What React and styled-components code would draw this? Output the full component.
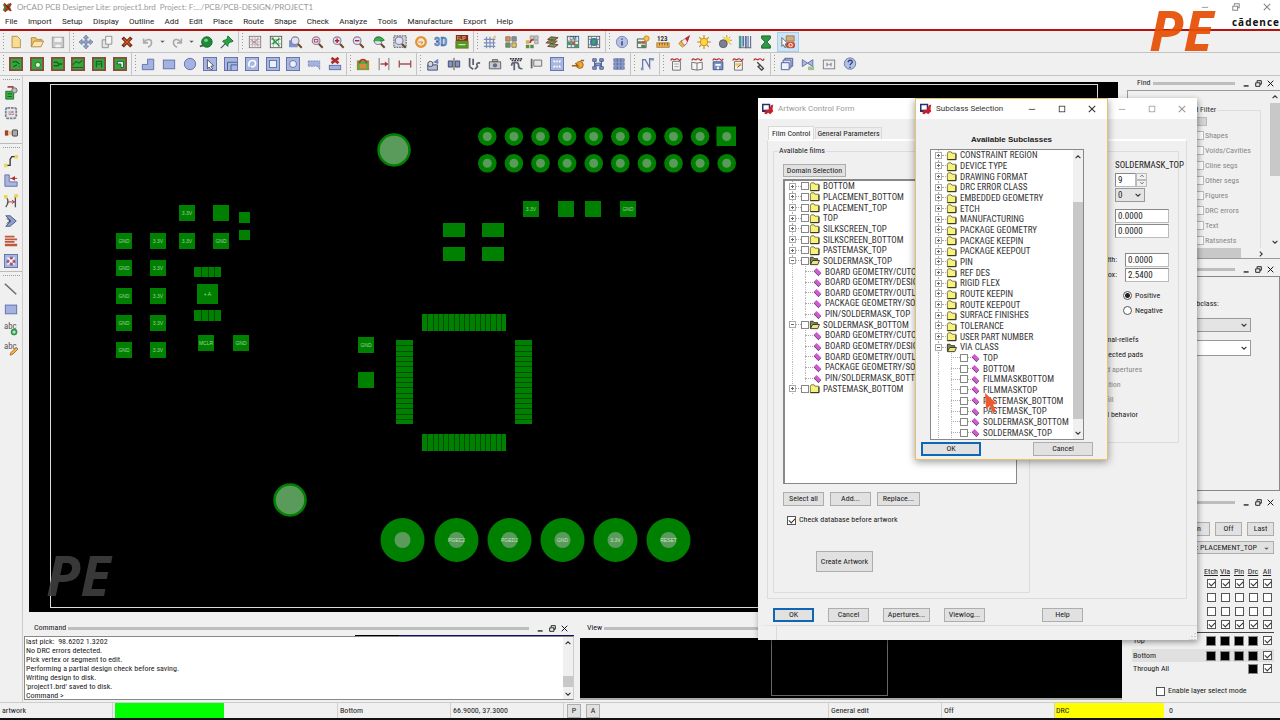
import React from "react";
import styled, { createGlobalStyle, css } from "styled-components";

const GlobalStyle = createGlobalStyle`
  * {
    box-sizing: border-box;
  }

  body {
    margin: 0;
    background: #f0f0f0;
    font-family: "Roboto Condensed", Roboto, sans-serif;
    font-size: 8px;
    line-height: 10px;
    color: #222;
    overflow: hidden;
  }

  button,
  input,
  select,
  textarea {
    font: inherit;
    color: inherit;
    margin: 0;
  }
`;

const Page = styled.div`
  position: relative;
  display: flex;
  flex-direction: column;
  height: 100vh;
  overflow: hidden;
`;

/* ---------- icons ---------- */

const glass = (
  <>
    <path d="M10 10l4.5 4.5" stroke="#6b4a2a" strokeWidth="2.4" />
    <circle cx="7" cy="6.5" r="4.4" fill="#dfe3f2" stroke="#8c7f9c" strokeWidth="1.3" />
  </>
);

const board = (
  <>
    <rect width="16" height="16" fill="#8a4a3c" />
    <rect x="2" y="2" width="12" height="12" fill="#35a83a" />
  </>
);

const tile = <rect x=".5" y=".5" width="15" height="15" fill="#a9b6e0" stroke="#5a6ba8" />;
const wave = <path d="M2 4c2-4 3 0 5-1s2-2 4 0 2 0 3-1" fill="none" stroke="#b3262c" strokeWidth="1.3" />;
const sheet = <path d="M4 5h9v10H4z" fill="#f4f4f4" stroke="#666" />;

const glyphs = {
  app: (
    <>
      <path d="M1 3l5 2 3-3 5 1-2 5 2 5-5-1-4 2-4-2 2-4z" fill="#3d8a35" />
      <path d="M3 2l10 11M13 2L4 14" stroke="#c4221c" strokeWidth="2.6" />
      <path d="M6 5l5 5" stroke="#222" strokeWidth="1.4" />
    </>
  ),
  form: (
    <>
      <rect x="0" y="1" width="11" height="11" fill="#2b2f6b" />
      <path d="M2 3h7v6H2z" fill="#fff" />
      <path d="M3 14l2-5 4 0 3-6 3-1-1 6 1 3-4 4-3-2-2 2z" fill="#c6202c" />
    </>
  ),
  fresh: <path d="M3.5 1.5h6l3.5 3.5v9.500H3.5z" fill="#f7dc96" stroke="#b48a3c" />,
  open: (
    <>
      <path d="M1.500 13V3h5l1 2h6v3" fill="#f1c66a" stroke="#b4803a" />
      <path d="M1.500 13.500L4.500 7h11l-3 6.500z" fill="#fbe6ae" stroke="#b4803a" />
    </>
  ),
  save: (
    <>
      <rect x="1.500" y="2.500" width="13" height="12" fill="#c9c9c9" stroke="#999" />
      <path d="M4 3h8v5H4zM5 11h6v3H5z" fill="#f3f3f3" />
    </>
  ),
  move: (
    <path
      d="M8 0l3 3.500H9v3.500h3.500V5L16 8l-3.500 3V9H9v3.500h2L8 16l-3-3.500h2V9H3.500v2L0 8l3.500-3v2H7V3.500H5z"
      fill="#93a6c8"
      stroke="#56698f"
      strokeWidth=".7"
    />
  ),
  copy: (
    <>
      <path d="M2.500 5.500h7v9h-7z" fill="#e4e4e4" stroke="#888" />
      <path d="M6.500 1.500h7v9h-7z" fill="#f6f6f6" stroke="#888" />
    </>
  ),
  cut: (
    <>
      <path d="M3 3l10 10M13 3L3 13" stroke="#6e2410" strokeWidth="4" />
      <path d="M4 4l8 8M12 4l-8 8" stroke="#d4582a" strokeWidth="1.500" />
    </>
  ),
  undo: <path d="M3 4v5h5M3.500 8.500C7 3 12.500 5 12 9c0 2-2 4-4 5" fill="none" stroke="#aaa" strokeWidth="1.800" />,
  redo: <path d="M13 4v5H8M12.500 8.500C9 3 3.500 5 4 9c0 2 2 4 4 5" fill="none" stroke="#aaa" strokeWidth="1.800" />,
  caret: <path d="M3 6h10l-5 5z" fill="#555" />,
  dot: (
    <>
      <path d="M1 13l7-2" stroke="#555" strokeWidth="2" />
      <circle cx="9" cy="8" r="6" fill="#1d8a37" stroke="#11602a" />
      <circle cx="8" cy="6" r="2" fill="#7fd28a" />
    </>
  ),
  pin: (
    <>
      <path d="M1 15l6-6" stroke="#555" strokeWidth="1.500" />
      <path d="M9 1l6 6-2 1-2 0-2 3 0 2L3 7l2-1 3-1z" fill="#2aa345" stroke="#14692a" />
    </>
  ),
  rats: (
    <>
      <rect x="1.500" y="1.500" width="13" height="13" fill="#f3ecec" stroke="#777" />
      <path d="M2 5h12M2 8h12M2 11h12M5 2v12M8 2v12M11 2v12" stroke="#c0b7bd" />
      <path d="M3 5l9 7M12 4L5 10" stroke="#b07878" />
    </>
  ),
  ratsOn: (
    <>
      <rect x="1.500" y="1.500" width="13" height="13" fill="#f3f8f3" stroke="#555" />
      <path d="M2 5h12M2 10h12M5 2v12M11 2v12" stroke="#8fb597" />
      <path d="M3 3l9 10M12 4L4 10" stroke="#1f8b36" strokeWidth="1.400" />
    </>
  ),
  zoomFit: (
    <>
      <path d="M0 6h10v8H0z" fill="#7c93cf" />
      {glass}
    </>
  ),
  zoomBox: (
    <>
      {glass}
      <rect x="5" y="5" width="4" height="3" fill="none" stroke="#c23a4a" />
    </>
  ),
  zoomIn: (
    <>
      {glass}
      <path d="M7 4v5M4.500 6.500h5" stroke="#b71c2c" strokeWidth="1.600" />
    </>
  ),
  zoomOut: (
    <>
      {glass}
      <path d="M4.500 6.500h5" stroke="#b71c2c" strokeWidth="1.600" />
    </>
  ),
  zoomBack: (
    <>
      {glass}
      <path d="M2 7c2-6 9-6 12-1L9 7" fill="#3fae4e" stroke="#1b7a2c" />
    </>
  ),
  zoomWorld: (
    <>
      <rect x="1" y="1" width="14" height="13" fill="#cfd6e6" stroke="#444" strokeDasharray="2 1" />
      {glass}
    </>
  ),
  refresh: (
    <>
      <circle cx="8" cy="8" r="5.500" fill="#fbe9cf" stroke="#e0943a" strokeWidth="2.600" />
      <path d="M5 8h5l-2 3" fill="none" stroke="#c87020" />
    </>
  ),
  cube: (
    <text x="0" y="13" fontSize="14" fontWeight="bold" fill="#6f9bd6" stroke="#3f669f" strokeWidth=".5">
      3D
    </text>
  ),
  flip: (
    <>
      <rect x="1" y="0" width="14" height="7" fill="#7c2e1e" />
      <rect x="1" y="7" width="14" height="8" fill="#4c9a2e" stroke="#8b6a1e" />
      <text x="2" y="6" fontSize="6" fill="#f4d27a">FLIP</text>
      <path d="M4 11h8" stroke="#c5e88a" strokeWidth="1.500" />
    </>
  ),
  grid: (
    <>
      <path d="M1 5h13M1 9h13M1 13h13M4 2v13M8 2v13M12 4v11" stroke="#7c8fb8" strokeWidth="1.400" />
      <path d="M11 3l4-2M13 1l1 3" stroke="#e5b04a" />
    </>
  ),
  colors: (
    <>
      <path d="M2 2h5v5H2z" fill="#e58e3c" stroke="#777" />
      <path d="M9 2h5v5H9z" fill="#8a8f98" stroke="#777" />
      <path d="M2 9h5v5H2z" fill="#5f9b55" stroke="#777" />
      <path d="M9 9h5v5H9z" fill="#e9c84c" stroke="#777" />
    </>
  ),
  shadow: (
    <>
      <path d="M6 1h4v4H6zM11 1h4v4h-4zM11 6h4v4h-4z" fill="#c4c8cd" stroke="#999" />
      <path d="M1 6h4v4H1z" fill="#d9ad4a" />
      <path d="M1 11h4v4H1zM6 11h4v4H6z" fill="#5c8c4c" />
      <path d="M6 9c0-3 2-4 4-3" fill="none" stroke="#b83322" strokeWidth="2" />
    </>
  ),
  layers: (
    <>
      <path d="M3 5l4-3 8 1-4 3z" fill="#4d9a4b" stroke="#733" />
      <path d="M1 9l4-3 9 1-4 3z" fill="#4d9a4b" stroke="#a33" />
      <path d="M3 13l4-3 8 1-4 3z" fill="#62a860" stroke="#733" />
    </>
  ),
  cm: (
    <>
      <rect x="1.500" y="1.500" width="13" height="13" fill="#e6efe6" stroke="#3b5c7a" />
      <path d="M2 7h12M2 11h12M6 6v8M10 6v8" stroke="#546a80" />
      <path d="M2 8h4v3H2zM10 11h4v3h-4z" fill="#46a04a" />
      <path d="M7 8h3v3H7z" fill="#c44b3e" />
      <text x="4" y="6" fontSize="6" fill="#234">CM</text>
    </>
  ),
  world: (
    <>
      <rect x="1.500" y="1.500" width="13" height="13" fill="#e9eee9" stroke="#555" />
      <path d="M2 5h12M2 11h12M5 2v12M11 2v12" stroke="#777" />
      <circle cx="8" cy="8" r="4.500" fill="#3876a8" />
      <path d="M6 5l4 1-1 4-3 1z" fill="#45a35a" />
    </>
  ),
  info: (
    <>
      <circle cx="8" cy="8" r="6.500" fill="#b6c1e2" stroke="#7785b3" />
      <path d="M8 4v1.500M8 7v5" stroke="#44558f" strokeWidth="2" />
    </>
  ),
  report: (
    <>
      <path d="M1.500 4.500h10v10h-10z" fill="#f2f2f2" stroke="#444" />
      <path d="M2 7h4v3H2zM6 11h5v3H6z" fill="#46894a" />
      <path d="M6 7h5v3H6z" fill="#b6534a" />
      <circle cx="12" cy="4" r="3" fill="#f3c73c" stroke="#b4862a" />
    </>
  ),
  ruler: (
    <>
      <text x="1" y="7" fontSize="8" fontWeight="bold" fill="#333">123</text>
      <rect x="1" y="9" width="14" height="5" fill="#f0b552" stroke="#a8742a" />
      <path d="M4 9v3M7 9v3M10 9v3M13 9v3" stroke="#7a5520" />
    </>
  ),
  dart: (
    <>
      <path d="M2 10l3-4 5 5-4 3z" fill="#e7b83b" stroke="#8c6a30" strokeWidth=".6" />
      <path d="M5 7l9-6-3 9-3 2z" fill="#f6eaea" stroke="#8c2730" strokeWidth=".6" />
      <path d="M9 4l6-4-3 8z" fill="#c32a38" />
    </>
  ),
  sun: (
    <>
      <path d="M8 0v16M0 8h16M2.500 2.500l11 11M13.500 2.500l-11 11" stroke="#c58a1b" strokeWidth="1.300" />
      <circle cx="8" cy="8" r="4.200" fill="#ffd73a" stroke="#c58a1b" />
    </>
  ),
  dim: (
    <>
      <path d="M10 0v12M4 6h12M6 2l9 9M14 2L7 9" stroke="#c58a1b" />
      <circle cx="10" cy="6" r="3.500" fill="#ffd73a" />
      <circle cx="6" cy="10" r="4.500" fill="#7a8090" stroke="#555c6c" />
    </>
  ),
  bars: (
    <>
      <path d="M1 1h3v14H1z" fill="#4b9a8e" />
      <path d="M5 1h2v12H5zM8 1h2v14H8z" fill="#5573a8" />
      <path d="M11 1h1v14h-1zM14 1h1v14h-1z" fill="#334a7a" />
      <path d="M1 14.500h14" stroke="#667" />
    </>
  ),
  hourglass: <path d="M3 1h10v3L9 8l4 4v3H3v-3l4-4-4-4z" fill="#2c9a46" stroke="#135c26" />,
  noPick: (
    <>
      <path d="M6 1h9v6H6z" fill="#d6ab7c" stroke="#9a7348" />
      <rect x="6.500" y="8.500" width="9" height="6" rx="2" fill="#e1583c" stroke="#b5432c" />
      <circle cx="11" cy="11.500" r="2" fill="none" stroke="#fff" />
      <path d="M1 3l7 7H5l1 4-2 0-1-3-2 2z" fill="#fff" stroke="#333" strokeWidth=".8" />
    </>
  ),
  b1: <>{board}<path d="M4 6l4-1 4 3M5 11l4-2M11 11h1" fill="none" stroke="#14642a" strokeWidth="1.500" /></>,
  b2: <>{board}<circle cx="9" cy="9" r="3" fill="#dff0d8" stroke="#14642a" /></>,
  b3: <>{board}<path d="M3 6h4l2 2h4M3 10h5l2-2" fill="none" stroke="#14642a" strokeWidth="1.500" /></>,
  b4: <>{board}<path d="M2 9l4-4 3 2 4-3M2 12h12" fill="none" stroke="#14642a" strokeWidth="1.300" /></>,
  b5: <>{board}<path d="M5 12V5h6v7M5 8h6" fill="none" stroke="#14642a" strokeWidth="1.300" /></>,
  b6: <>{board}<path d="M5 5h7v7H9V8H5z" fill="#dfe6f2" stroke="#14642a" /></>,
  ell: <path d="M1.500 14.500v-6h6v-6h7v12z" fill="#a3b2df" stroke="#5a6ba8" />,
  rect: <rect x="1.500" y="3.500" width="13" height="10" fill="#a3b2df" stroke="#5a6ba8" />,
  circle: <circle cx="8" cy="8" r="6.500" fill="#a3b2df" stroke="#5a6ba8" />,
  select: <>{tile}<path d="M5 3l7 7-3 .5 2 3-2 1-2-3-2 2z" fill="#fff" stroke="#445" /></>,
  island: <>{tile}<path d="M4 15V6h11M8 15V9h7" fill="none" stroke="#445593" /></>,
  arc: <>{tile}<path d="M5 11c-2-5 1-7 4-7s4 4 2 6-3 2-4 0" fill="none" stroke="#fff" strokeWidth="1.800" /></>,
  square: <>{tile}<rect x="4" y="4" width="8" height="8" fill="#eef0f8" stroke="#5a6ba8" /></>,
  ring: <>{tile}<circle cx="8" cy="8" r="4" fill="#eef0f8" stroke="#5a6ba8" /></>,
  wedge: <path d="M1.500 4.500h13v10c-2-6-6-4-7-4h-6z" fill="#a3b2df" stroke="#7484bb" strokeDasharray="2 1" />,
  void: (
    <>
      <rect x="1.500" y="9.500" width="13" height="5" fill="#a3b2df" stroke="#5a6ba8" />
      <path d="M4 1l8 6M12 1L4 7" stroke="#b02a2a" strokeWidth="3" />
    </>
  ),
  lock: (
    <>
      <rect x="1.500" y="4.500" width="13" height="10" fill="#4fae45" stroke="#a8782a" />
      <path d="M4 7a4 4 0 018 0" fill="none" stroke="#b0392a" strokeWidth="2" />
      <path d="M4 8h8v5H4z" fill="#d98b3b" />
    </>
  ),
  dimension: (
    <>
      <path d="M2.500 1v14M13.500 1v14" stroke="#888" strokeWidth="1.300" />
      <path d="M4 8h6" stroke="#b0333a" strokeWidth="1.500" />
      <path d="M9 5l4 3-4 3z" fill="#b0333a" />
    </>
  ),
  span: <path d="M1.500 4v8M14.500 4v8M2 8h12" fill="none" stroke="#a0565c" strokeWidth="1.600" />,
  place: <><path d="M2 9h11v6H2z" fill="#b4bfe0" stroke="#445" /><circle cx="5" cy="8" r="3" fill="#d6d9e2" stroke="#445" /><path d="M8 6l6-4v6z" fill="#7082b8" /></>,
  mirror: <><path d="M1.500 4.500h5v7h-5zM9.500 4.500h5v7h-5z" fill="#7f91c9" stroke="#445" /><path d="M8 1v14" stroke="#333" /></>,
  tool: <path d="M3 1v10M7 2v7M3 11l4 3M9 14l3-3c-2-3 0-5 3-4" fill="none" stroke="#5c6270" strokeWidth="2" />,
  camera: <><path d="M1.500 5.500h13v8h-13zM5 3h6v2H5z" fill="#c7cad2" stroke="#555" /><circle cx="8" cy="9.500" r="2.500" fill="#666f85" /></>,
  binary: <><path d="M1 2h14M3 4h12" stroke="#333" strokeDasharray="2 1" strokeWidth="1.500" /><path d="M3 10c0-5 8-5 8 0s4 2 4 4M6 7v8" fill="none" stroke="#5e6575" strokeWidth="2" /></>,
  flag: <><path d="M3 2v11" stroke="#666" strokeWidth="2" /><path d="M5.500 3.500h9v7h-9z" fill="#e6e6e6" stroke="#666" /></>,
  fan: <>{tile}<path d="M4 4l2 2M12 4l-2 2M4 12l2-2M12 12l-2-2M8 4v2M8 10v2" stroke="#fff" strokeWidth="1.600" /></>,
  spin: <><circle cx="10" cy="9" r="4" fill="#f0a52e" stroke="#96621a" /><path d="M1 10h7l-3-3M11 4h4" fill="none" stroke="#96621a" strokeWidth="1.500" /></>,
  ladder: <><path d="M2 2h4v3H2zM10 2h4v3h-4zM2 11h4v3H2zM10 11h4v3h-4zM5 7h6v3H5z" fill="#8a9ccf" stroke="#44558f" /><path d="M4 5v6M12 5v6" stroke="#44558f" /></>,
  array: <path d="M2 2h4v3H2zM6 2h4v3H6zM10 2h4v3h-4zM2 6.500h4v3H2zM6 6.500h4v3H6zM10 6.500h4v3h-4zM2 11h4v3H2zM6 11h4v3H6zM10 11h4v3h-4z" fill="#8a9ccf" stroke="#5a6aa0" strokeWidth=".8" />,
  signal: <><path d="M3 13V3l3 0 5 9 0-10h3" fill="none" stroke="#6678ad" strokeWidth="1.500" /><path d="M1 12h3v3H1zM12 1h4v3h-4z" fill="#8593bd" /></>,
  s1: <>{sheet}{wave}<path d="M6 8h5M6 11h5" stroke="#999" /></>,
  s2: <><path d="M2 6l6 1 6-1v8l-6 1-6-1z" fill="#f6f6f6" stroke="#666" />{wave}<path d="M8 7v8" stroke="#666" /></>,
  s3: <><path d="M2.500 5.500h11v9h-11z" fill="#7c95c8" stroke="#334a7a" />{wave}<path d="M5 8h6v2H5zM7 11h2v3H7z" fill="#fff" /></>,
  s4: <>{sheet}{wave}<path d="M5 7h7v3H5z" fill="#f0c95a" /><path d="M7 12l4-3" stroke="#845" /></>,
  s5: <>{wave}<path d="M6 6l7 7-2 2-4-4 3-2" fill="none" stroke="#444" strokeWidth="1.600" /></>,
  stack: <><path d="M5.500 1.500h9v9h-9z" fill="#c2cbe8" stroke="#445593" /><path d="M3.500 3.500h9v9h-9z" fill="#d9dff2" stroke="#445593" /><path d="M1.500 6.500h9v8h-9z" fill="#eef0fa" stroke="#445593" /></>,
  bow: <><path d="M1.500 3l6 4 6-4v8l-6-4-6 4z" fill="#a9b8dd" stroke="#5a6ba8" /><path d="M8 11h7v4H8z" fill="#9cc48f" /></>,
  bowBox: <><rect x="1.500" y="3.500" width="13" height="10" fill="#eee" stroke="#777" /><path d="M5 6l3 2.500L11 6v5L8 8.500 5 11z" fill="#8a94a8" /></>,
  help: <><circle cx="8" cy="7.500" r="6.500" fill="#b6c1e2" stroke="#5f70a8" /><path d="M6 6c0-3 5-3 4.500 0-.5 1.500-2.500 1.500-2.500 3.500M8 11v1.500" fill="none" stroke="#334480" strokeWidth="1.600" /></>,
  unplaced: <><path d="M2 6h9v9H2z" fill="#3fae4a" stroke="#1d6f2a" /><path d="M4 1h6v4" fill="none" stroke="#a34a44" strokeWidth="2" /><circle cx="12" cy="5" r="3" fill="#bbb" stroke="#666" /><path d="M4 9h5M4 12h5" stroke="#155c22" /></>,
  chip: <><rect x="2" y="2" width="12" height="12" rx="2" fill="#e4e4e8" stroke="#7a8294" strokeWidth="2" strokeDasharray="3 1" /><text x="5" y="10" fontSize="6" fill="#a04a5a">U5</text></>,
  swap: <><path d="M1 5h4v6H1z" fill="#a34034" /><path d="M5 6h4v4H5z" fill="#e5cf80" /><rect x="9.500" y="4.500" width="6" height="7" rx="1" fill="#aaa" stroke="#333" /></>,
  route: <><path d="M2 13h5V6l2-3h4" fill="none" stroke="#333" strokeWidth="1.500" /><path d="M0 11h4v4H0zM12 1h4v4h-4z" fill="#ead94e" /></>,
  slide: <><path d="M1 1v13h14V9H6V1z" fill="#a9b6e0" stroke="#5a6ba8" /><path d="M7 5h8M9 5l3-2v4z" stroke="#b02a2a" fill="#b02a2a" /></>,
  spacing: <><path d="M2 3c4 4 3 8 0 12M13 2v13" fill="none" stroke="#555" strokeWidth="1.500" /><path d="M0 1h4v4H0zM12 0h4v4h-4z" fill="#ead94e" /><path d="M5 9h7M9 7l3 2-3 2" fill="none" stroke="#b02a2a" /></>,
  chevrons: <><path d="M2 2h5l7 6-7 6H2l6-6z" fill="#8fa0c9" stroke="#44558f" /><path d="M3 5l4 3-4 3" fill="none" stroke="#333" /></>,
  comb: <path d="M1 2h11v2H1zM1 5h14v2H1zM1 8h11v2H1zM1 11h14v3H1z" fill="#c0583f" />,
  mesh: <>{tile}<path d="M4 4l8 8M12 4l-8 8" stroke="#fff" strokeWidth="1.500" /><path d="M7 3h3v3H7zM3 7h3v3H3zM10 7h3v3h-3zM7 10h3v3H7z" fill="#a8506a" /></>,
  line: <path d="M1 2l13 12" stroke="#666d78" strokeWidth="1.800" />,
  abcAdd: <><text x="0" y="8" fontSize="10" fill="#555">abc</text><circle cx="11.500" cy="11.500" r="3.800" fill="#2c9a46" /><path d="M11.500 9.500v4M9.500 11.500h4" stroke="#fff" /></>,
  abcEdit: <><text x="0" y="8" fontSize="10" fill="#555">abc</text><path d="M7 15l1-3 6-6 2 2-6 6z" fill="#f0b33c" stroke="#a34a24" strokeWidth=".8" /></>,
};

const IconSvg = styled.svg`
  display: block;
  flex: none;
  width: ${(p) => p.$size}px;
  height: ${(p) => p.$size}px;
`;

function Icon({ name, size = 14 }) {
  return (
    <IconSvg viewBox="0 0 16 16" $size={size} aria-hidden="true">
      {glyphs[name]}
    </IconSvg>
  );
}

/* ---------- title, menu and toolbars ---------- */

const TitleBar = styled.header`
  display: flex;
  align-items: center;
  gap: 4px;
  flex: none;
  height: 14px;
  padding: 0 9px 0 2px;
  background: #fff;
  color: #999;
  font-family: Lato, sans-serif;
  font-size: 8px;
  white-space: pre;
`;

const WindowButtons = styled.div`
  display: flex;
  align-items: center;
  gap: ${(p) => p.$gap}px;
  margin-left: auto;
  color: ${(p) => p.$color || "#333"};
`;

const WindowButton = styled.button`
  display: flex;
  padding: 0;
  border: 0;
  background: none;
`;

const MenuBar = styled.nav`
  display: flex;
  align-items: center;
  justify-content: space-between;
  flex: none;
  height: 17px;
  padding: 0 0 0 5px;
  background: #fff;
  border-bottom: 2px solid #b3120e;
  font-family: Roboto, sans-serif;
  font-size: 8px;
`;

const MenuList = styled.div`
  display: flex;
  justify-content: space-between;
  flex: none;
  width: 508px;
`;

const MenuItem = styled.button`
  padding: 0;
  border: 0;
  background: none;
`;

const Brand = styled.strong`
  font-family: "Open Sans", sans-serif;
  font-size: 10px;
  letter-spacing: 1px;
  color: #111;
`;

const Toolbar = styled.div`
  display: flex;
  flex: none;
  height: ${(p) => p.$height}px;
  border-bottom: 1px solid #c4c4c4;
`;

const ToolGroup = styled.div`
  display: flex;
  align-items: center;
  justify-content: space-between;
  flex: none;
  width: ${(p) => p.$width}px;
  padding: 0 3px 0 8px;
  border-right: 1px solid ${(p) => (p.$last ? "transparent" : "#c4c4c4")};
  background: repeating-linear-gradient(#999 0 1px, transparent 1px 3px) no-repeat 3px 2px / 1px 17px;
`;

const ToolButton = styled.button`
  display: flex;
  align-items: center;
  justify-content: center;
  flex: none;
  width: ${(p) => (p.$narrow ? 4 : 16)}px;
  height: 18px;
  padding: 0;
  border: 0;
  background: none;

  ${(p) =>
    p.$active &&
    css`
      width: 20px;
      background: #cce4f7;
      outline: 1px solid #a8cdea;
    `}
`;

const topTools = [
  [70, ["fresh", "open", "save"]],
  [169, ["move", "copy", "cut", "undo", "caret", "redo", "caret", "dot", "pin"]],
  [235, ["rats", "ratsOn", "zoomFit", "zoomBox", "zoomIn", "zoomOut", "zoomBack", "zoomWorld", "refresh", "cube", "flip"]],
  [132, ["grid", "colors", "shadow", "layers", "cm", "world"]],
  [196, ["info", "report", "ruler", "dart", "sun", "dim", "bars", "hourglass", "noPick"]],
];

const lowerTools = [
  [132, ["b1", "b2", "b3", "b4", "b5", "b6"]],
  [215, ["ell", "rect", "circle", "select", "island", "arc", "square", "ring", "wedge", "void"]],
  [70, ["lock", "dimension", "span"]],
  [214, ["place", "mirror", "tool", "camera", "binary", "flag", "fan", "spin", "ladder", "array"]],
  [29, ["signal"]],
  [111, ["s1", "s2", "s3", "s4", "s5"]],
  [91, ["stack", "bow", "bowBox", "help"]],
];

function ToolRow({ groups, height }) {
  return (
    <Toolbar $height={height}>
      {groups.map(([width, names], i) => (
        <ToolGroup key={i} $width={width} $last={i === groups.length - 1}>
          {names.map((name, k) => (
            <ToolButton key={k} aria-label={name} $narrow={name === "caret"} $active={name === "noPick"}>
              <Icon name={name} size={name === "caret" ? 7 : 14} />
            </ToolButton>
          ))}
        </ToolGroup>
      ))}
    </Toolbar>
  );
}

/* ---------- main area ---------- */

const Main = styled.main`
  display: flex;
  flex: 1;
  min-height: 0;
`;

const SideBar = styled.aside`
  flex: none;
  width: 23px;
  border-right: 1px solid #ccc;
`;

const SideGroup = styled.div`
  display: flex;
  flex-direction: column;
  align-items: center;
  gap: 6px;
  padding: 3px 0 3px;
  border-bottom: 1px solid ${(p) => (p.$last ? "transparent" : "#bbb")};

  &::before {
    content: "";
    width: 17px;
    border-top: 1px dotted #999;
  }
`;

const Center = styled.section`
  display: flex;
  flex-direction: column;
  flex: 1;
  min-width: 0;
`;

const Canvas = styled.div`
  position: relative;
  flex: 1;
  min-height: 0;
  margin: 6px 9px 8px 6px;
  background: #000;
  overflow: hidden;
`;

const Drawing = styled.svg`
  display: block;
  width: 100%;
  height: 100%;
  font-family: "Liberation Sans", sans-serif;
`;

const Watermark = styled.div`
  position: absolute;
  left: ${(p) => p.$left}px;
  ${(p) => (p.$bottom ? `bottom: ${p.$bottom}px;` : `top: ${p.$top}px;`)}
  font: italic 700 56px/56px "Open Sans", sans-serif;
  color: ${(p) => p.$color};
  opacity: 0.92;
  pointer-events: none;
`;

const PAD = "#008000";
const HOLE = "#5a9a5a";

const pads = [
  [187, 213, "3.3V"], [221, 213], [187, 241, "3.3V"], [221, 241, "GND"],
  [206, 343, "MCLR"], [241, 343, "GND"],
  [531, 209, "3.3V"], [566, 209], [593, 209], [628, 209, "GND"],
  [366, 345, "GND"], [366, 380],
  ...[241, 268, 296, 323, 350].flatMap((y) => [[124, y, "GND"], [158, y, "3.3V"]]),
];

const testPoints = [[402], [456, "PGEC2"], [509, "PGED2"], [562, "GND"], [615, "3.3V"], [668, "RESET"]];

function Comb({ x, y, w, h, count, vertical }) {
  const step = (vertical ? h : w) / count;
  const lines = Array.from({ length: count - 1 }, (_, i) => Math.round((i + 1) * step));
  return (
    <g>
      <rect x={x} y={y} width={w} height={h} fill={PAD} />
      {lines.map((d) =>
        vertical ? (
          <rect key={d} x={x} y={y + d} width={w} height="1" fill="#004a00" />
        ) : (
          <rect key={d} x={x + d} y={y} width="1" height={h} fill="#004a00" />
        )
      )}
    </g>
  );
}

function Layout() {
  return (
    <Drawing aria-label="Board layout">
      <g transform="translate(-29 -82)">
        <rect x="50.5" y="84.5" width="1047" height="523" fill="none" stroke="#ddd" />
        {[[394, 150], [290, 500]].map(([x, y]) => (
          <circle key={x} cx={x} cy={y} r="15.500" fill={HOLE} stroke={PAD} strokeWidth="2.500" />
        ))}
        {[136.5, 163.3].map((y, row) =>
          Array.from({ length: 10 }, (_, i) => {
            const x = 487.3 + i * 26.6;
            return (
              <g key={`${row}${i}`}>
                {row === 0 && i === 9 ? (
                  <rect x="716.5" y="126.5" width="19.500" height="19.500" fill={PAD} />
                ) : (
                  <circle cx={x} cy={y} r="9.300" fill={PAD} />
                )}
                <circle cx={x} cy={y} r="4.500" fill={HOLE} />
              </g>
            );
          })
        )}
        {[[443, 223], [482, 223], [443, 247], [482, 247]].map(([x, y]) => (
          <rect key={`${x}${y}`} x={x} y={y} width="22" height="14" fill={PAD} />
        ))}
        {pads.map(([x, y, net]) => (
          <g key={`${x}-${y}`}>
            <rect x={x - 8} y={y - 8} width="16" height="16" fill={PAD} />
            {net && (
              <text x={x} y={y + 2} fontSize="5" fill="#9fd09f" textAnchor="middle">
                {net}
              </text>
            )}
          </g>
        ))}
        <rect x="239" y="212" width="11" height="11" fill={PAD} />
        <rect x="239" y="230" width="11" height="10" fill={PAD} />
        <rect x="197" y="284" width="21" height="20" fill={PAD} />
        <text x="207.5" y="296" fontSize="5" fill="#9fd09f" textAnchor="middle">+ A</text>
        <Comb x={194} y={267} w={27} h={10} count={4} />
        <Comb x={194} y={310} w={27} h={11} count={4} />
        <Comb x={422} y={314} w={84} h={17} count={16} />
        <Comb x={422} y={434} w={84} h={17} count={16} />
        <Comb x={396} y={340} w={17} h={84} count={16} vertical />
        <Comb x={515} y={340} w={17} h={84} count={16} vertical />
        {testPoints.map(([x, net]) => (
          <g key={x}>
            <circle cx={x + 0.5} cy="540" r="22" fill={PAD} />
            <circle cx={x + 0.5} cy="540" r="8" fill={HOLE} />
            {net && (
              <text x={x + 0.5} y="542" fontSize="5" fill="#c4e4c4" textAnchor="middle">
                {net}
              </text>
            )}
          </g>
        ))}
      </g>
    </Drawing>
  );
}

/* ---------- docked panels ---------- */

const PanelHead = styled.div`
  display: flex;
  align-items: center;
  flex: none;
  height: ${(p) => p.$height || 14}px;
  padding: 0 ${(p) => p.$right}px 0 ${(p) => p.$left || 10}px;
`;

const PanelRule = styled.span`
  flex: 1;
  height: 3px;
  margin: 0 8px 0 2px;
  background: #bdbdbd;
`;

function Minimize({ size = 7 }) {
  return (
    <IconSvg viewBox="0 0 10 10" $size={size}>
      <path d="M1 8.500h7" stroke="currentColor" strokeWidth="1.800" />
    </IconSvg>
  );
}

function Restore({ size = 7 }) {
  return (
    <IconSvg viewBox="0 0 10 10" $size={size}>
      <path d="M3 3V1h6v5H7M1 4h6v5H1z" fill="none" stroke="currentColor" strokeWidth="1.300" />
    </IconSvg>
  );
}

function Close({ size = 7 }) {
  return (
    <IconSvg viewBox="0 0 10 10" $size={size}>
      <path d="M1 1l8 8M9 1L1 9" stroke="currentColor" strokeWidth="1.400" />
    </IconSvg>
  );
}

function DockHead({ title, right = 6, height, left }) {
  return (
    <PanelHead $right={right} $height={height} $left={left}>
      {title}
      <PanelRule />
      <WindowButtons $gap={5} $color="#111">
        <WindowButton aria-label="Minimize"><Minimize /></WindowButton>
        <WindowButton aria-label="Float"><Restore /></WindowButton>
        <WindowButton aria-label="Close"><Close /></WindowButton>
      </WindowButtons>
    </PanelHead>
  );
}

const BottomDock = styled.div`
  display: flex;
  gap: 6px;
  flex: none;
  height: 82px;
  padding: 0 5px 2px 1px;
`;

const DockPanel = styled.section`
  display: flex;
  flex-direction: column;
  flex: ${(p) => p.$grow} 1 0;
  min-width: 0;
`;

const LogBox = styled.div`
  position: relative;
  display: flex;
  flex: 1;
  min-height: 0;
  border: 1px solid #888;
  border-right-color: #ccc;
  background: #fff;

  &::before {
    content: "";
    position: absolute;
    top: -2px;
    right: -1px;
    width: 40%;
    height: 1px;
    background: linear-gradient(90deg, #000 0 20%, #10106a 20%);
  }
`;

const LogText = styled.div`
  flex: 1;
  padding-left: 1px;
  line-height: 9px;
  white-space: pre;
`;

const ViewBox = styled.div`
  display: flex;
  justify-content: center;
  flex: 1;
  margin-top: 2px;
  border-bottom: 2px solid #aaa;
  background: #000;
`;

const ViewFrame = styled.div`
  width: 117px;
  margin: 0 44px 2px 0;
  border: 1px solid #666;
`;

const ScrollTrack = styled.div`
  display: flex;
  flex-direction: ${(p) => (p.$row ? "row" : "column")};
  justify-content: space-between;
  flex: none;
  background: #f0f0f0;
  ${(p) => (p.$row ? "height: 10px;" : "width: 10px;")}
`;

const ScrollButton = styled.button`
  display: flex;
  align-items: center;
  justify-content: center;
  flex: none;
  width: 10px;
  height: ${(p) => p.$size || 12}px;
  padding: 0;
  border: 0;
  background: none;
`;

const Thumb = styled.div`
  flex: ${(p) => p.$grow};
  background: #c8c8c8;
`;

const Spacer = styled.div`
  flex: ${(p) => p.$grow};
`;

const arrows = { up: "M1 7l4-4 4 4", down: "M1 3l4 4 4-4", right: "M3 1l4 4-4 4" };

function Arrow({ dir, size = 6 }) {
  return (
    <IconSvg viewBox="0 0 10 10" $size={size}>
      <path d={arrows[dir]} fill="none" stroke="#333" strokeWidth="1.800" />
    </IconSvg>
  );
}

function Scrollbar({ before, thumb, after, size }) {
  return (
    <ScrollTrack>
      <ScrollButton aria-label="Scroll up" $size={size}><Arrow dir="up" /></ScrollButton>
      <Spacer $grow={before} />
      <Thumb $grow={thumb} />
      <Spacer $grow={after} />
      <ScrollButton aria-label="Scroll down" $size={size}><Arrow dir="down" /></ScrollButton>
    </ScrollTrack>
  );
}

const RightDock = styled.aside`
  display: flex;
  flex-direction: column;
  flex: none;
  width: 153px;
`;

const FindBox = styled.div`
  display: flex;
  flex: none;
  height: 158px;
  border: 1px solid #999;
  border-right: 0;
  border-bottom: 0;
`;

const FilterSet = styled.fieldset`
  display: flex;
  flex-direction: column;
  flex: 1;
  margin: 14px 9px 0 4px;
  padding: 2px 0 0 62px;
  min-width: 0;
  border: 1px solid #ddd;
  border-bottom: 0;
  color: #888;

  legend {
    margin-left: -57px;
    padding: 0 1px;
    color: #333;
    white-space: nowrap;
  }
`;

const FilterOn = styled.button`
  width: 12px;
  height: 9px;
  margin: 0 0 2px 0;
  padding: 0;
  border: 1px solid #bbb;
  background: #d4d4d4;
`;

const Check = styled.input`
  appearance: none;
  flex: none;
  width: ${(p) => p.$size || 9}px;
  height: ${(p) => p.$size || 9}px;
  border: 1px solid ${(p) => p.$border || "#555"};
  background: #fff;
  vertical-align: middle;

  &:checked::before {
    content: "";
    display: block;
    width: 5px;
    height: 3px;
    margin: 1px 0 0 1px;
    border: solid #333;
    border-width: 0 0 1px 1px;
    transform: rotate(-45deg);
  }
`;

const CheckLabel = styled.label`
  display: flex;
  align-items: center;
  gap: ${(p) => p.$gap || 3}px;
  white-space: nowrap;
  color: ${(p) => (p.$dim ? "#888" : "inherit")};
`;

const FilterList = styled.div`
  display: flex;
  flex-direction: column;
  justify-content: space-around;
  flex: 1;
`;

const HBar = styled(ScrollTrack)`
  height: 11px;
  margin-bottom: 3px;
  border-bottom: 1px solid #999;
`;

const OptionsBox = styled.div`
  display: flex;
  flex-direction: column;
  flex: none;
  height: 215px;
  padding: 22px 28px 0 6px;
  border: 1px solid #888;

  label {
    margin: 0 0 9px 0;
    padding-right: 33px;
    text-align: right;
    white-space: nowrap;
  }
`;

const SelectWrap = styled.span`
  position: relative;
  display: block;
  width: ${(p) => (p.$width ? `${p.$width}px` : "100%")};
  margin-bottom: ${(p) => p.$after || 0}px;

  svg {
    position: absolute;
    top: calc(50% - 3px);
    right: 4px;
    pointer-events: none;
  }
`;

const SelectField = styled.select`
  appearance: none;
  display: block;
  width: 100%;
  height: ${(p) => p.$height || 14}px;
  padding: 0 2px;
  border: 1px solid #999;
  border-radius: 0;
  background: ${(p) => (p.$plain ? "#fff" : "#e4e4e4")};
`;

const VisPanel = styled.section`
  display: flex;
  flex-direction: column;
  flex: 1;
  margin-top: 4px;
`;

const VisButtons = styled.div`
  display: flex;
  justify-content: flex-end;
  gap: 5px;
  margin: 13px 6px 5px;
`;

const PushButton = styled.button`
  min-width: ${(p) => p.$width || 41}px;
  height: ${(p) => p.$height || 14}px;
  padding: 0 1px;
  border: 1px solid #adadad;
  background: #e1e1e1;
  white-space: nowrap;

  ${(p) =>
    p.$primary &&
    css`
      border: 2px solid #0f66b4;
    `}
`;

const LayerPick = styled(SelectField)`
  border-color: #adadad;
  background: #e1e1e1;
  padding-right: 16px;
  text-align-last: right;
`;

const LayerTable = styled.table`
  width: calc(100% - 11px);
  margin: 12px 6px 0 5px;
  border-collapse: collapse;
  table-layout: fixed;

  th,
  td {
    width: 14px;
    height: 14px;
    padding: 0;
    text-align: center;
    font-weight: normal;
    line-height: 9px;
  }

  thead th {
    height: 10px;
    text-decoration: underline;
  }

  tr > :first-child {
    width: auto;
    padding-left: 1px;
    text-align: left;
  }
`;

const ColorRow = styled.tr`
  background: ${(p) => (p.$active ? "#e0e0e0" : "none")};

  th,
  td {
    height: ${(p) => (p.$first ? 17 : 13)}px;
    border-top: ${(p) => (p.$first ? "1px solid #444" : "0")};
  }
`;

const Swatch = styled.button`
  display: block;
  width: 10px;
  height: 10px;
  margin: 0 auto;
  padding: 0;
  border: 1px solid #888;
  background: #000;
`;

const LayerMode = styled.div`
  margin: 11px 0 0 29px;
`;

const StatusBar = styled.footer`
  display: flex;
  align-items: center;
  flex: none;
  height: 18px;
  border-top: 1px solid #ccc;
  border-bottom: 2px solid #111;
`;

const StatusCell = styled.div`
  display: flex;
  align-items: center;
  gap: 5px;
  flex: none;
  width: ${(p) => p.$width}px;
  height: 15px;
  padding-left: ${(p) => p.$pad || 2}px;
  border-right: 1px solid #d0d0d0;
`;

const StatusLight = styled.span`
  flex: none;
  width: 109px;
  height: 15px;
  padding: 3px 1px;
  margin-right: 5px;
  background: ${(p) => p.$color};
`;

/* ---------- dialogs ---------- */

const Dialog = styled.section`
  position: absolute;
  display: flex;
  flex-direction: column;
  background: #f0f0f0;
`;

const ArtworkWindow = styled(Dialog)`
  left: 758px;
  top: 98px;
  width: 439px;
  box-shadow: 1px 2px 6px rgba(0, 0, 0, 0.4);
`;

const SubclassWindow = styled(Dialog)`
  left: 915px;
  top: 98px;
  width: 193px;
  border: 1px solid #e3c36b;
  box-shadow: 0 2px 8px rgba(0, 0, 0, 0.4);
`;

const DialogTitle = styled.div`
  display: flex;
  align-items: center;
  gap: 4px;
  flex: none;
  height: ${(p) => p.$height}px;
  padding: 0 11px 0 4px;
  background: #fff;
  color: ${(p) => p.$color};
  font-family: Roboto, sans-serif;
  font-size: 8px;
`;

const Maximize = () => (
  <IconSvg viewBox="0 0 10 10" $size={8}>
    <rect x="1.500" y="1.500" width="7" height="7" fill="none" stroke="currentColor" />
  </IconSvg>
);

const Dash = () => (
  <IconSvg viewBox="0 0 10 10" $size={8}>
    <path d="M1 5.500h8" stroke="currentColor" />
  </IconSvg>
);

function DialogBar({ title, color, height }) {
  return (
    <DialogTitle $color={color} $height={height}>
      <Icon name="form" size={12} />
      {title}
      <WindowButtons $gap={22} $color={color}>
        <WindowButton aria-label="Minimize"><Dash /></WindowButton>
        <WindowButton aria-label="Maximize"><Maximize /></WindowButton>
        <WindowButton aria-label="Close"><Close size={8} /></WindowButton>
      </WindowButtons>
    </DialogTitle>
  );
}

const Tabs = styled.div`
  display: flex;
  align-items: flex-end;
  gap: 1px;
  padding: 7px 0 0 10px;
`;

const Tab = styled.button`
  height: ${(p) => (p.$active ? 14 : 12)}px;
  margin-bottom: ${(p) => (p.$active ? -1 : 0)}px;
  padding: 0 ${(p) => (p.$active ? 3 : 1)}px;
  border: 1px solid #d9d9d9;
  border-bottom: 0;
  background: ${(p) => (p.$active ? "#fafafa" : "#ececec")};
  z-index: 1;
`;

const TabPage = styled.div`
  display: flex;
  align-items: flex-start;
  gap: 6px;
  height: 460px;
  margin: 0 10px 0 9px;
  padding: 5px 7px 0 5px;
  border: 1px solid #dcdcdc;
  border-top: 2px solid #fff;
`;

const Group = styled.fieldset`
  display: flex;
  flex-direction: column;
  align-items: flex-start;
  flex: ${(p) => (p.$wide ? "none" : "1")};
  width: ${(p) => (p.$wide ? "257px" : "auto")};
  min-width: 0;
  margin: 0;
  padding: ${(p) => (p.$wide ? "8px 9px 20px" : "1px 9px 20px 5px")};
  border: 1px solid #dcdcdc;

  legend {
    margin-left: ${(p) => (p.$wide ? "-5px" : "0")};
    padding: 0 1px;
  }
`;

const TreeBox = styled.div`
  display: flex;
  align-self: stretch;
  border: 1px solid #888;
  border-width: 2px 1px 1px 2px;
  background: #fff;
  color: #333;
  font-size: 9px;
`;

const FilmBox = styled(TreeBox)`
  height: 305px;
  margin: 2px 3px 8px 0;
`;

const SubclassBox = styled(TreeBox)`
  height: 291px;
  margin: 4px 23px 2px 14px;
  border-width: 1px;
`;

const TreeList = styled.ul`
  display: grid;
  grid-auto-rows: 1fr;
  flex: 1;
  height: ${(p) => p.$height}px;
  margin: 0;
  padding: 0 0 0 ${(p) => p.$left}px;
  overflow: hidden;
  list-style: none;
`;

const TreeRow = styled.li`
  display: flex;
  align-items: center;
  min-height: 0;
  padding-left: ${(p) => p.$indent || 0}px;
  background: repeating-linear-gradient(#aaa 0 1px, #fff 1px 2px) no-repeat 3px 0 / 1px 100%;
  white-space: nowrap;

  ${(p) =>
    p.$indent &&
    css`
      background: repeating-linear-gradient(#bbb 0 1px, #fff 1px 2px) no-repeat 3px 0 / 1px 100%,
        repeating-linear-gradient(#bbb 0 1px, #fff 1px 2px) no-repeat ${p.$indent}px 0 / 1px 100%;
    `}
`;

const TreeText = styled.span`
  margin-left: 3px;
`;

const Stub = styled.span`
  flex: none;
  width: ${(p) => p.$width}px;
  border-top: 1px dotted #aaa;
`;

const Expander = styled.button`
  display: flex;
  flex: none;
  padding: 0;
  border: 0;
  background: #fff;
`;

function Toggle({ open }) {
  return (
    <Expander aria-label={open ? "Collapse" : "Expand"}>
      <IconSvg viewBox="0 0 7 7" $size={7}>
        <rect x=".5" y=".5" width="6" height="6" fill="#fff" stroke="#aaa" />
        <path d={open ? "M2 3.500h3" : "M2 3.500h3M3.500 2v3"} stroke="#667" />
      </IconSvg>
    </Expander>
  );
}

function Folder({ open }) {
  return (
    <IconSvg viewBox="0 0 12 12" $size={11}>
      {open ? (
        <>
          <path d="M1.500 10V2.500h3l1 1.500h4v2" fill="#8d8d4a" stroke="#333" />
          <path d="M1.500 10.500L4 6h7.500l-2 4.500z" fill="#e8e87a" stroke="#333" />
        </>
      ) : (
        <>
          <path d="M1.500 10.500v-7l1-1.500h3l1 1.500h4v7z" fill="#f6f27c" stroke="#77733a" />
          <path d="M1.500 10.500h9.500V4" fill="none" stroke="#222" />
        </>
      )}
    </IconSvg>
  );
}

const Gem = () => (
  <IconSvg viewBox="0 0 10 10" $size={9}>
    <path d="M1 4l3-3 5 5-3 3z" fill="#cf5bd0" />
    <path d="M1 4l5 5 3-3v1L6 10 1 5z" fill="#4c1a58" />
  </IconSvg>
);

const films = [
  ["BOTTOM"], ["PLACEMENT_BOTTOM"], ["PLACEMENT_TOP"], ["TOP"], ["SILKSCREEN_TOP"],
  ["SILKSCREEN_BOTTOM"], ["PASTEMASK_TOP"],
  ["SOLDERMASK_TOP", [
    "BOARD GEOMETRY/CUTOUT", "BOARD GEOMETRY/DESIGN_OUTLINE", "BOARD GEOMETRY/OUTLINE",
    "PACKAGE GEOMETRY/SOLDERMASK_TOP", "PIN/SOLDERMASK_TOP",
  ]],
  ["SOLDERMASK_BOTTOM", [
    "BOARD GEOMETRY/CUTOUT", "BOARD GEOMETRY/DESIGN_OUTLINE", "BOARD GEOMETRY/OUTLINE",
    "PACKAGE GEOMETRY/SOLDERMASK_BOTTOM", "PIN/SOLDERMASK_BOTTOM",
  ]],
  ["PASTEMASK_BOTTOM"],
];

const classes = [
  "CONSTRAINT REGION", "DEVICE TYPE", "DRAWING FORMAT", "DRC ERROR CLASS", "EMBEDDED GEOMETRY",
  "ETCH", "MANUFACTURING", "PACKAGE GEOMETRY", "PACKAGE KEEPIN", "PACKAGE KEEPOUT", "PIN",
  "REF DES", "RIGID FLEX", "ROUTE KEEPIN", "ROUTE KEEPOUT", "SURFACE FINISHES", "TOLERANCE",
  "USER PART NUMBER",
];

const viaLayers = [
  "TOP", "BOTTOM", "FILMMASKBOTTOM", "FILMMASKTOP", "PASTEMASK_BOTTOM", "PASTEMASK_TOP",
  "SOLDERMASK_BOTTOM", "SOLDERMASK_TOP",
];

const ButtonRow = styled.div`
  display: flex;
  gap: ${(p) => p.$gap}px;
  margin: ${(p) => p.$margin || 0};
`;

const ArtworkCheck = styled(CheckLabel)`
  margin: 9px 0 26px 4px;
`;

const CreateButton = styled(PushButton)`
  margin-left: 33px;
`;

const HelpButton = styled(PushButton)`
  margin-left: 43px;
`;

const DialogFoot = styled.div`
  display: flex;
  justify-content: flex-end;
  align-items: flex-end;
  height: 15px;
  margin-top: 3px;
  border-top: 1px solid #dadada;
  border-left: 18px solid #f0f0f0;
  box-shadow: inset 1px 0 #dadada;
  color: #aaa;
`;

const Field = styled.div`
  display: flex;
  align-items: center;
  justify-content: flex-end;
  gap: 8px;
  width: 100%;
  height: 15px;
  margin-top: ${(p) => p.$top || 0}px;
  white-space: nowrap;
`;

const Value = styled.div`
  display: flex;
  flex: none;
  width: ${(p) => p.$width || 54}px;
  font-size: 9px;
`;

const TextBox = styled.input`
  width: ${(p) => p.$width || "100%"};
  height: 14px;
  padding: 0 2px;
  border: 1px solid #888;
  border-right-color: #bbb;
  border-bottom-color: #bbb;
  border-radius: 0;
  background: #fff;
`;

const Steps = styled.div`
  display: flex;
  flex-direction: column;

  button {
    display: flex;
    align-items: center;
    justify-content: center;
    width: 11px;
    height: 7px;
    padding: 0;
    border: 1px solid #bbb;
    background: #f0f0f0;
  }
`;

const Radio = styled.input`
  appearance: none;
  flex: none;
  width: 9px;
  height: 9px;
  border: 1px solid #555;
  border-radius: 50%;
  background: #fff;

  &:checked {
    background: radial-gradient(#222 0 2px, #fff 3px);
  }
`;

const RadioLabel = styled(CheckLabel)`
  width: 100%;
  height: 15px;
  margin-top: ${(p) => p.$top || 0}px;
  padding-left: 81px;
`;

const OptionLabel = styled(CheckLabel)`
  height: 15px;
  margin-top: ${(p) => p.$top || 0}px;
`;

const Heading = styled.h2`
  margin: 16px 0 0;
  font: bold 8px/10px "Liberation Sans", sans-serif;
  text-align: center;
`;

const CursorArrow = styled.svg`
  position: absolute;
  left: 984px;
  top: 392px;
  width: 14px;
  height: 22px;
`;

function Films() {
  return (
    <Group $wide>
      <legend>Available films</legend>
      <PushButton $width={63} $height={13}>Domain Selection</PushButton>
      <FilmBox>
        <TreeList $height={213} $left={4}>
          {films.map(([name, layers]) => (
            <React.Fragment key={name}>
              <TreeRow>
                <Toggle open={!!layers} />
                <Stub $width={5} />
                <Check type="checkbox" aria-label={name} $size={8} $border="#888" />
                <Folder open={!!layers} />
                <TreeText>{name}</TreeText>
              </TreeRow>
              {layers?.map((layer) => (
                <TreeRow key={layer} $indent={16}>
                  <Stub $width={8} />
                  <Gem />
                  <TreeText>{layer}</TreeText>
                </TreeRow>
              ))}
            </React.Fragment>
          ))}
        </TreeList>
      </FilmBox>
      <ButtonRow $gap={6}>
        <PushButton>Select all</PushButton>
        <PushButton>Add...</PushButton>
        <PushButton $width={43}>Replace...</PushButton>
      </ButtonRow>
      <ArtworkCheck>
        <Check type="checkbox" defaultChecked />
        Check database before artwork
      </ArtworkCheck>
      <CreateButton $width={57} $height={21}>Create Artwork</CreateButton>
    </Group>
  );
}

function FilmOptions() {
  return (
    <Group>
      <legend>Film options</legend>
      <Field>Film name:<Value>SOLDERMASK_TOP</Value></Field>
      <Field>
        <label htmlFor="sequence">PDF Sequence:</label>
        <Value>
          <TextBox id="sequence" defaultValue="9" $width="21px" />
          <Steps>
            <button aria-label="Increase"><Arrow dir="up" size={4} /></button>
            <button aria-label="Decrease"><Arrow dir="down" size={4} /></button>
          </Steps>
        </Value>
      </Field>
      <Field>
        <label htmlFor="rotation">Rotation:</label>
        <Value>
          <SelectWrap $width={30}>
            <SelectField id="rotation"><option>0</option></SelectField>
            <Arrow dir="down" />
          </SelectWrap>
        </Value>
      </Field>
      <Field $top={6}>
        <label htmlFor="offx">Offset  X:</label>
        <Value><TextBox id="offx" defaultValue="0.0000" /></Value>
      </Field>
      <Field>
        <label htmlFor="offy">Y:</label>
        <Value><TextBox id="offy" defaultValue="0.0000" /></Value>
      </Field>
      <Field $top={14}>
        <label htmlFor="linew">Undefined line width:</label>
        <Value $width={44}><TextBox id="linew" defaultValue="0.0000" /></Value>
      </Field>
      <Field>
        <label htmlFor="bbox">Shape bounding box:</label>
        <Value $width={44}><TextBox id="bbox" defaultValue="2.5400" /></Value>
      </Field>
      <RadioLabel $top={6}><Radio type="radio" name="plot" defaultChecked />Positive</RadioLabel>
      <RadioLabel><Radio type="radio" name="plot" />Negative</RadioLabel>
      <OptionLabel $top={14}><Check type="checkbox" />Full contact thermal-reliefs</OptionLabel>
      <OptionLabel><Check type="checkbox" />Suppress unconnected pads</OptionLabel>
      <OptionLabel $dim><Check type="checkbox" />Draw missing pad apertures</OptionLabel>
      <OptionLabel $dim><Check type="checkbox" />Use aperture rotation</OptionLabel>
      <OptionLabel $dim><Check type="checkbox" />Suppress shape fill</OptionLabel>
      <OptionLabel><Check type="checkbox" />Vector based pad behavior</OptionLabel>
    </Group>
  );
}

function ArtworkDialog() {
  return (
    <ArtworkWindow aria-label="Artwork Control Form">
      <DialogBar title="Artwork Control Form" color="#999" height={21} />
      <Tabs>
        <Tab $active>Film Control</Tab>
        <Tab>General Parameters</Tab>
      </Tabs>
      <TabPage>
        <Films />
        <FilmOptions />
      </TabPage>
      <ButtonRow $gap={14} $margin="9px 0 0 15px">
        <PushButton $primary>OK</PushButton>
        <PushButton>Cancel</PushButton>
        <PushButton $width={47}>Apertures...</PushButton>
        <PushButton>Viewlog...</PushButton>
        <HelpButton>Help</HelpButton>
      </ButtonRow>
      <DialogFoot>
        <IconSvg viewBox="0 0 8 8" $size={8}>
          <path d="M6 1v1M6 4v1M3 4v1M6 7v1M3 7v1M0 7v1" stroke="currentColor" />
        </IconSvg>
      </DialogFoot>
    </ArtworkWindow>
  );
}

function SubclassDialog() {
  return (
    <SubclassWindow aria-label="Subclass Selection">
      <DialogBar title="Subclass Selection" color="#333" height={20} />
      <Heading>Available Subclasses</Heading>
      <SubclassBox>
        <TreeList $height={288} $left={4}>
          {classes.map((name) => (
            <TreeRow key={name}>
              <Toggle />
              <Stub $width={4} />
              <Folder />
              <TreeText>{name}</TreeText>
            </TreeRow>
          ))}
          <TreeRow>
            <Toggle open />
            <Stub $width={4} />
            <Folder open />
            <TreeText>VIA CLASS</TreeText>
          </TreeRow>
          {viaLayers.map((name) => (
            <TreeRow key={name} $indent={16}>
              <Stub $width={9} />
              <Check type="checkbox" aria-label={name} $size={8} $border="#888" />
              <Stub $width={3} />
              <Gem />
              <TreeText>{name}</TreeText>
            </TreeRow>
          ))}
        </TreeList>
        <Scrollbar before={39} thumb={217} after={7} size={13} />
      </SubclassBox>
      <ButtonRow $gap={52} $margin="0 0 3px 5px">
        <PushButton $primary $width={60}>OK</PushButton>
        <PushButton $width={60}>Cancel</PushButton>
      </ButtonRow>
    </SubclassWindow>
  );
}

const finds = ["Shapes", "Voids/Cavities", "Cline segs", "Other segs", "Figures", "DRC errors", "Text", "Ratsnests"];
const columns = ["Etch", "Via", "Pin", "Drc", "All"];
const visRows = [["Conductors", true], ["Planes", false], ["Masks", false], ["All Layers", true]];
const colorRows = [["Top", 4], ["Bottom", 4], ["Through All", 1]];

function Visibility() {
  return (
    <VisPanel>
      <DockHead title="Visibility" />
      <VisButtons>
        <PushButton $width={27}>On</PushButton>
        <PushButton $width={27}>Off</PushButton>
        <PushButton $width={27}>Last</PushButton>
      </VisButtons>
      <ButtonRow $margin="0 6px 0 5px">
        <SelectWrap>
          <LayerPick aria-label="View" $height={13}><option>View: PLACEMENT_TOP</option></LayerPick>
          <IconSvg viewBox="0 0 16 16" $size={7}>{glyphs.caret}</IconSvg>
        </SelectWrap>
      </ButtonRow>
      <LayerTable>
        <thead>
          <tr>
            <th />
            {columns.map((c) => <th key={c}>{c}</th>)}
          </tr>
        </thead>
        <tbody>
          {visRows.map(([name, on]) => (
            <tr key={name}>
              <th>{name}</th>
              {columns.map((c) => (
                <td key={c}><Check type="checkbox" aria-label={`${name} ${c}`} defaultChecked={on} /></td>
              ))}
            </tr>
          ))}
          {colorRows.map(([name, swatches], row) => (
            <ColorRow key={name} $active={row === 1} $first={row === 0}>
              <th>{name}</th>
              {[0, 1, 2, 3].map((i) => (
                <td key={i}>{i >= 4 - swatches && <Swatch aria-label={`${name} ${columns[i]} color`} />}</td>
              ))}
              <td><Check type="checkbox" aria-label={`${name} all`} defaultChecked /></td>
            </ColorRow>
          ))}
        </tbody>
      </LayerTable>
      <LayerMode>
        <CheckLabel><Check type="checkbox" />Enable layer select mode</CheckLabel>
      </LayerMode>
    </VisPanel>
  );
}

const log = `last pick:  98.6202 1.3202
No DRC errors detected.
Pick vertex or segment to edit.
Performing a partial design check before saving.
Writing design to disk.
'project1.brd' saved to disk.
Command >`;

const menus = [
  "File", "Import", "Setup", "Display", "Outline", "Add", "Edit", "Place", "Route", "Shape",
  "Check", "Analyze", "Tools", "Manufacture", "Export", "Help",
];

const sideTools = [
  ["unplaced", "chip", "swap"],
  ["route", "slide", "spacing", "chevrons", "comb", "mesh"],
  ["line", "rect", "abcAdd", "abcEdit"],
];

function App() {
  return (
    <Page>
      <GlobalStyle />
      <TitleBar>
        <Icon name="app" size={11} />
        {"OrCAD PCB Designer Lite: project1.brd  Project: F:.../PCB/PCB-DESIGN/PROJECT1"}
        <WindowButtons $gap={23} $color="#888">
          <WindowButton aria-label="Minimize"><Dash /></WindowButton>
          <WindowButton aria-label="Restore"><Restore size={8} /></WindowButton>
          <WindowButton aria-label="Close"><Close size={8} /></WindowButton>
        </WindowButtons>
      </TitleBar>
      <MenuBar>
        <MenuList>
          {menus.map((m) => <MenuItem key={m}>{m}</MenuItem>)}
        </MenuList>
        <Brand>cādence</Brand>
      </MenuBar>
      <ToolRow groups={topTools} height={22} />
      <ToolRow groups={lowerTools} height={23} />
      <Main>
        <SideBar>
          {sideTools.map((names, i) => (
            <SideGroup key={i} $last={i === 2}>
              {names.map((name) => (
                <WindowButton key={name} aria-label={name}><Icon name={name} /></WindowButton>
              ))}
            </SideGroup>
          ))}
        </SideBar>
        <Center>
          <Canvas>
            <Layout />
            <Watermark $left={17} $bottom={10} $color="#3d3d3d">PE</Watermark>
          </Canvas>
          <BottomDock>
            <DockPanel $grow={550}>
              <DockHead title="Command" height={16} />
              <LogBox>
                <LogText>{log}</LogText>
                <Scrollbar before={29} thumb={12} after={1} size={11} />
              </LogBox>
            </DockPanel>
            <DockPanel $grow={542}>
              <DockHead title="View" height={16} left={7} />
              <ViewBox><ViewFrame /></ViewBox>
            </DockPanel>
          </BottomDock>
        </Center>
        <RightDock>
          <DockHead title="Find" />
          <FindBox>
            <FilterSet>
              <legend>Design Object Find Filter</legend>
              <FilterOn aria-label="All On" />
              <FilterList>
                {finds.map((name) => (
                  <CheckLabel key={name} $gap={1}>
                    <Check type="checkbox" $border="#bbb" />
                    {name}
                  </CheckLabel>
                ))}
              </FilterList>
            </FilterSet>
            <Scrollbar before={0} thumb={73} after={60} />
          </FindBox>
          <HBar $row>
            <Thumb $grow={8} />
            <Spacer $grow={1} />
            <ScrollButton aria-label="Scroll right"><Arrow dir="right" /></ScrollButton>
            <Spacer $grow={1} />
          </HBar>
          <DockHead title="Options" />
          <OptionsBox>
            <label htmlFor="subclass">Active Class and Subclass:</label>
            <SelectWrap $after={8}>
              <SelectField id="subclass" />
              <Arrow dir="down" />
            </SelectWrap>
            <SelectWrap>
              <SelectField aria-label="Subclass" $plain $height={16} />
              <Arrow dir="down" />
            </SelectWrap>
          </OptionsBox>
          <Visibility />
        </RightDock>
      </Main>
      <StatusBar>
        <StatusCell $width={113}>artwork</StatusCell>
        <StatusCell $width={225}><StatusLight $color="#00ff00" /></StatusCell>
        <StatusCell $width={113}>Bottom</StatusCell>
        <StatusCell $width={113}>66.9000, 37.3000</StatusCell>
        <StatusCell $width={265} $pad={3}>
          <PushButton $width={14}>P</PushButton>
          <PushButton $width={14}>A</PushButton>
        </StatusCell>
        <StatusCell $width={113}>General edit</StatusCell>
        <StatusCell $width={113}>Off</StatusCell>
        <StatusLight $color="#ffff00">DRC</StatusLight>
        0
      </StatusBar>
      <ArtworkDialog />
      <SubclassDialog />
      <CursorArrow viewBox="0 0 14 22">
        <path d="M1 1l12 11-4 .5 3 7-3 1.500-3-7-4 3z" fill="#ee5a2e" />
      </CursorArrow>
      <Watermark $left={1149} $top={1} $color="#e64e04">PE</Watermark>
    </Page>
  );
}

export default App;
